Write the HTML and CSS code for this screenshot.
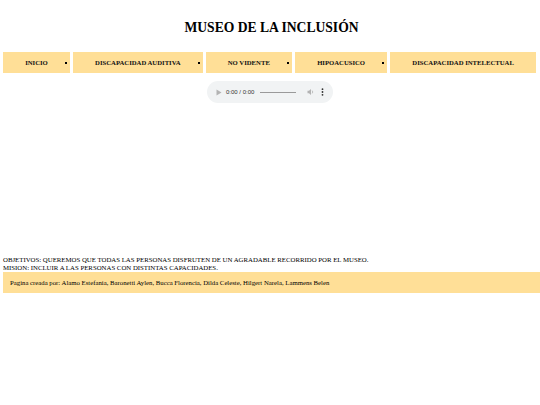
FILE: index.html
```html
<!DOCTYPE html>
<html lang="es">
<head>
<meta charset="utf-8">
<title>Museo de la Inclusión</title>
<link rel="stylesheet" href="styles.css">
</head>
<body>
<header class="header">
  <h1 class="title">MUSEO DE LA INCLUSIÓN</h1>
</header>
<nav class="nav">
  <ul class="menu">
    <li class="item"><a class="link" href="#">INICIO</a><span class="dot"></span></li>
    <li class="item"><a class="link" href="#">DISCAPACIDAD AUDITIVA</a><span class="dot"></span></li>
    <li class="item"><a class="link" href="#">NO VIDENTE</a><span class="dot"></span></li>
    <li class="item"><a class="link" href="#">HIPOACUSICO</a><span class="dot"></span></li>
    <li class="item"><a class="link" href="#">DISCAPACIDAD INTELECTUAL</a></li>
  </ul>
</nav>
<div class="player-row">
  <div class="player">
    <svg class="play" width="6" height="7" viewBox="0 0 6 7"><path d="M0.5 0.5 L5.5 3.5 L0.5 6.5 Z" fill="#b3b3b3"/></svg>
    <span class="time">0:00 / 0:00</span>
    <span class="track"></span>
    <svg class="vol" width="8" height="8" viewBox="0 0 8 8"><path d="M0.5 2.8 H2 L4 1 V7 L2 5.2 H0.5 Z" fill="#b3b3b3"/><path d="M5.2 2.6 Q6.3 4 5.2 5.4" stroke="#b3b3b3" stroke-width="0.8" fill="none"/></svg>
    <svg class="more" width="3" height="8" viewBox="0 0 3 8"><circle cx="1.5" cy="1.2" r="0.9" fill="#333"/><circle cx="1.5" cy="4" r="0.9" fill="#333"/><circle cx="1.5" cy="6.8" r="0.9" fill="#333"/></svg>
  </div>
</div>
<div class="blank"></div>
<section class="info">
  <p class="line">OBJETIVOS: QUEREMOS QUE TODAS LAS PERSONAS DISFRUTEN DE UN AGRADABLE RECORRIDO POR EL MUSEO.</p>
  <p class="line">MISION: INCLUIR A LAS PERSONAS CON DISTINTAS CAPACIDADES.</p>
</section>
<footer class="footer">
  <p class="credits">Pagina creada por: Alamo Estefania, Baronetti Aylen, Bucca Florencia, Dilda Celeste, Hilgert Narela, Lammens Belen</p>
</footer>
</body>
</html>
```
FILE: styles.css
```css
html, body {
  margin: 0;
  padding: 0;
  background: #ffffff;
}
body {
  font-family: "Liberation Serif", "Times New Roman", serif;
  color: #000;
  padding: 0 0 0 3px;
}
.header {
  padding-top: 19px;
  height: 52px;
  box-sizing: border-box;
}
.title {
  margin: 0;
  text-align: center;
  font-size: 13.6px;
  line-height: 17px;
  font-weight: bold;
}
.nav {
  padding-right: 4px;
}
.menu {
  list-style: none;
  margin: 0;
  padding: 0;
  display: flex;
  gap: 3px;
}
.item {
  flex: 1 1 auto;
  background: #ffdf97;
  height: 21px;
  display: flex;
  align-items: center;
  justify-content: center;
  position: relative;
  padding: 0 21px;
}
.link {
  font-size: 6.7px;
  font-weight: bold;
  color: #111;
  text-decoration: none;
  white-space: nowrap;
}
.dot {
  position: absolute;
  right: 3px;
  top: 10px;
  width: 2px;
  height: 2px;
  background: #000;
}
.player-row {
  display: flex;
  justify-content: center;
  padding-top: 8px;
  padding-right: 3px;
}
.player {
  width: 126px;
  height: 22px;
  border-radius: 11px;
  background: #f1f3f4;
  display: flex;
  align-items: center;
  box-sizing: border-box;
  padding-left: 9px;
}
.play { margin-right: 4px; }
.time {
  font-family: "Liberation Sans", Arial, sans-serif;
  font-size: 6px;
  color: #333;
  width: 30px;
}
.track {
  width: 36px;
  height: 1px;
  background: #9a9a9a;
  margin-left: 4px;
}
.vol { margin-left: 11px; }
.more { margin-left: 6px; }
.blank {
  height: 153px;
}
.info {
  font-size: 6.8px;
  line-height: 8px;
}
.line {
  margin: 0;
  white-space: nowrap;
}
.footer {
  background: #ffdf97;
  height: 21px;
  display: flex;
  align-items: center;
}
.credits {
  margin: 0 0 0 7px;
  font-size: 6.75px;
  white-space: nowrap;
}
```
